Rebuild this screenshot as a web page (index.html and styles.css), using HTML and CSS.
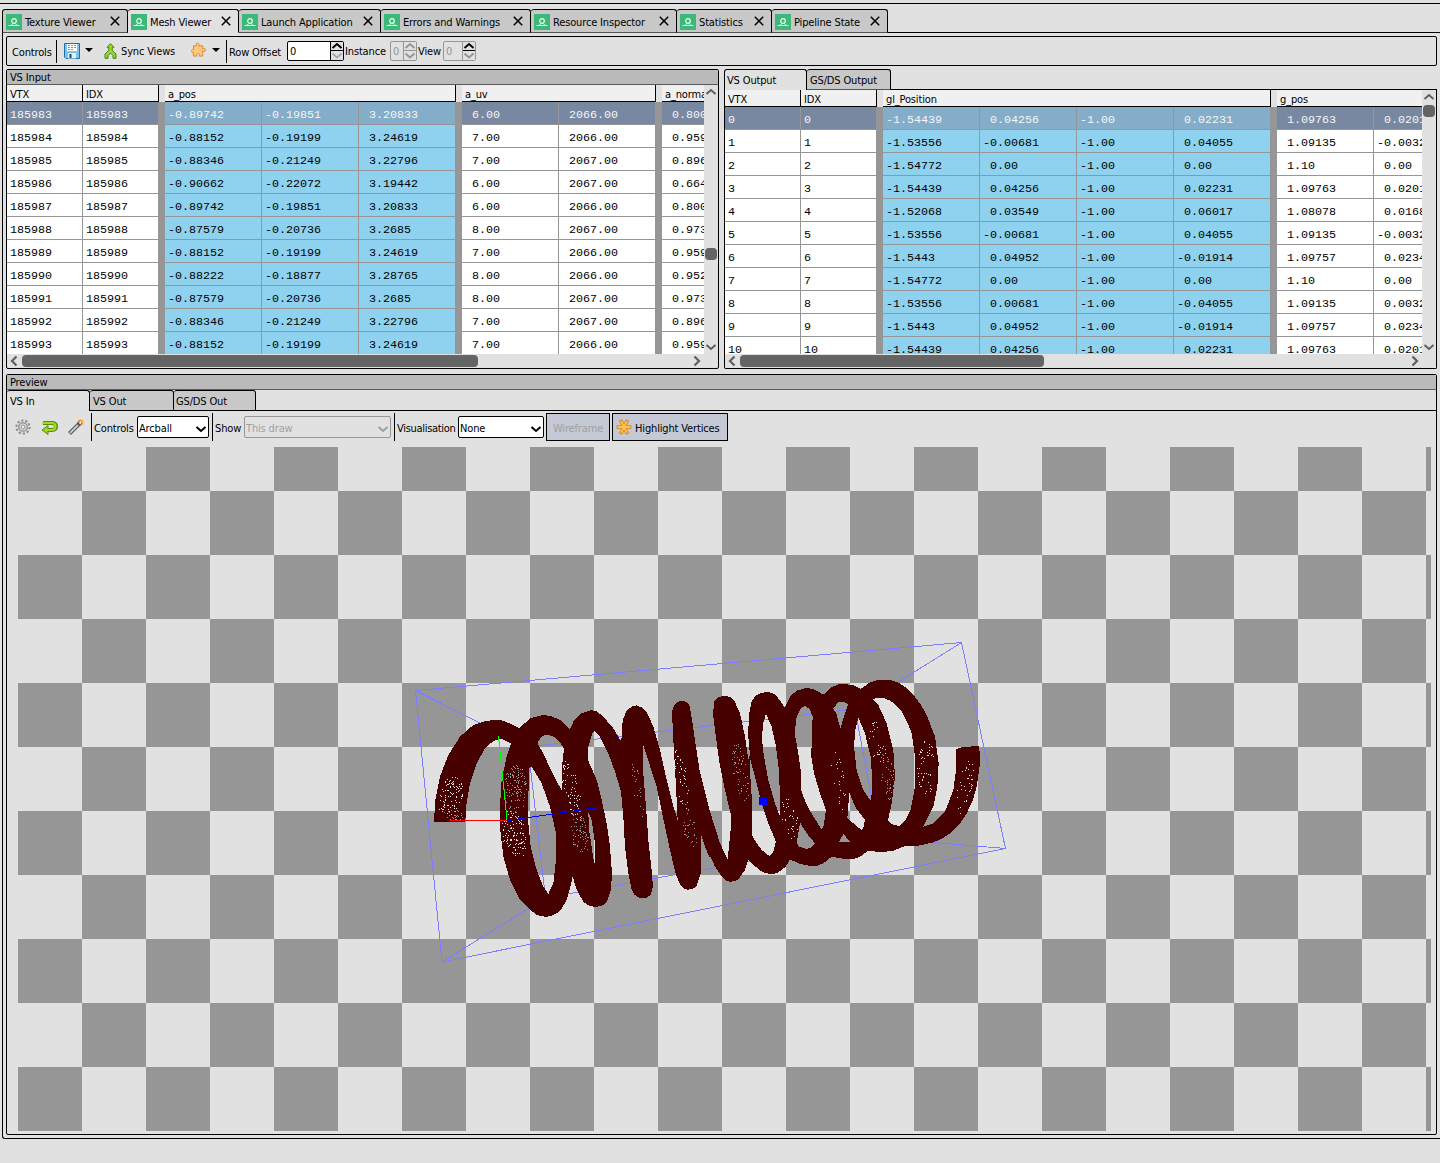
FILE: index.html
```html
<!DOCTYPE html>
<html lang="en">
<head>
<meta charset="utf-8">
<title>Mesh Viewer</title>
<link rel="stylesheet" href="styles.css">
</head>
<body>
<svg class="defs" aria-hidden="true">
  <symbol id="logo" viewBox="0 0 16 16"><rect width="16" height="16" fill="#3cb878"/><circle cx="8" cy="7" r="2.3" fill="none" stroke="#e9fff3" stroke-width="1.2"/><path d="M2.5 11.5H5L6.5 9.5M13.5 11.5H11L9.500 9.500M5 11.500H11" fill="none" stroke="#d6f5e4"/></symbol>
  <symbol id="close" viewBox="0 0 10 10"><path d="M.8 .8L9.200 9.200M9.200 .8L.8 9.200" stroke="#000" stroke-width="1.500" fill="none"/></symbol>
  <symbol id="up" viewBox="0 0 12 8"><path d="M1.500 6L6 2L10.500 6" fill="none" stroke="currentColor" stroke-width="2"/></symbol>
  <symbol id="down" viewBox="0 0 12 8"><path d="M1.500 2L6 6L10.500 2" fill="none" stroke="currentColor" stroke-width="2"/></symbol>
  <symbol id="left" viewBox="0 0 8 12"><path d="M6.500 1.500L2 6L6.500 10.500" fill="none" stroke="currentColor" stroke-width="2.200"/></symbol>
  <symbol id="right" viewBox="0 0 8 12"><path d="M1.500 1.500L6 6L1.500 10.500" fill="none" stroke="currentColor" stroke-width="2.200"/></symbol>
</svg>
<div class="window">
  <nav class="tabs main-tabs">
    <div class="tab w1"><svg class="logo"><use href="#logo"/></svg><span>Texture Viewer</span><svg class="close"><use href="#close"/></svg></div>
    <div class="tab active w2"><svg class="logo"><use href="#logo"/></svg><span>Mesh Viewer</span><svg class="close"><use href="#close"/></svg></div>
    <div class="tab w3"><svg class="logo"><use href="#logo"/></svg><span>Launch Application</span><svg class="close"><use href="#close"/></svg></div>
    <div class="tab w4"><svg class="logo"><use href="#logo"/></svg><span>Errors and Warnings</span><svg class="close"><use href="#close"/></svg></div>
    <div class="tab w5"><svg class="logo"><use href="#logo"/></svg><span>Resource Inspector</span><svg class="close"><use href="#close"/></svg></div>
    <div class="tab w6"><svg class="logo"><use href="#logo"/></svg><span>Statistics</span><svg class="close"><use href="#close"/></svg></div>
    <div class="tab w7"><svg class="logo"><use href="#logo"/></svg><span>Pipeline State</span><svg class="close"><use href="#close"/></svg></div>
    <div class="rest"></div>
  </nav>
  <main class="dock">
    <section class="controls">
      <span class="lbl-controls">Controls</span>
      <svg class="save" viewBox="0 0 16 16"><path d="M.5 .5H15.500V15.500H2L.5 14Z" fill="#7cc4ee" stroke="#1d70b0"/><rect x="3" y="1" width="10" height="7" fill="#fff"/><path d="M4 2.500H12M4 4.500H12M4 6.500H9" stroke="#8a9298" stroke-dasharray="2 1"/><rect x="4" y="10" width="8" height="5.500" fill="#e6eef4"/><rect x="5.500" y="11" width="2" height="4" fill="#246"/></svg>
      <i class="drop d1"></i>
      <svg class="sync" viewBox="0 0 13 16"><path d="M6.500 .7L10 4.300H8.300V7.500L12 11V15.300H9V12.500L6.500 10L4 12.500V15.300H1V11L4.700 7.500V4.300H3Z" fill="#9bd82c" stroke="#3f8511"/></svg>
      <span class="lbl-sync">Sync Views</span>
      <svg class="puzzle" viewBox="0 0 16 16"><path d="M2.500 3.500H6C4.800 1.500 5.500.6 7 .6S9.200 1.500 8 3.500H12.500V7C14.500 5.800 15.400 6.500 15.400 8S14.500 10.200 12.500 9V14.500H8.700C9.500 12.500 8.600 11.800 7.500 11.800S5.500 12.500 6.300 14.500H2.500V10.500C1 11 .6 10 .6 9S1 7 3 7.500Z" fill="#ffc978" stroke="#d98a3c"/></svg>
      <i class="drop d2"></i>
      <div class="row-offset"><span>Row Offset</span></div>
      <div class="spin s1"><b>0</b><div><svg><use href="#up"/></svg><svg class="dim"><use href="#down"/></svg></div></div>
      <span class="lbl-inst">Instance</span>
      <div class="spin off s2"><b>0</b><div><svg><use href="#up"/></svg><svg><use href="#down"/></svg></div></div>
      <span class="lbl-view">View</span>
      <div class="spin off s3"><b>0</b><div><svg class="on"><use href="#up"/></svg><svg><use href="#down"/></svg></div></div>
    </section>
    <div class="buffers">
      <section class="panel">
        <h2>VS Input</h2>
        <div class="grid-area">
          <div class="sheet">
            <div class="head"><span class="id">VTX</span><span class="id">IDX</span><i></i><span class="v3">a_pos</span><i></i><span class="v2">a_uv</span><i></i><span class="v3">a_normal</span></div>
            <div class="rows" id="input"></div>
          </div>
          <div class="vbar"><svg><use href="#up"/></svg><div class="thumb in"></div><svg><use href="#down"/></svg></div>
        </div>
        <div class="hbar"><svg><use href="#left"/></svg><div class="thumb in"></div><svg><use href="#right"/></svg></div>
      </section>
      <section class="output">
        <nav class="tabs sub">
          <div class="tab active o1"><span>VS Output</span></div>
          <div class="tab o2"><span>GS/DS Output</span></div>
          <div class="rest"></div>
        </nav>
        <div class="panel open">
          <div class="grid-area">
            <div class="sheet">
              <div class="head"><span class="id">VTX</span><span class="id">IDX</span><i></i><span class="v4">gl_Position</span><i></i><span class="v3">g_pos</span></div>
              <div class="rows" id="output"></div>
            </div>
            <div class="vbar"><svg><use href="#up"/></svg><div class="thumb out"></div><svg><use href="#down"/></svg></div>
          </div>
          <div class="hbar"><svg><use href="#left"/></svg><div class="thumb out"></div><svg><use href="#right"/></svg></div>
        </div>
      </section>
    </div>
    <section class="panel preview">
      <h2>Preview</h2>
      <nav class="tabs sub">
        <div class="tab active p1"><span>VS In</span></div>
        <div class="tab p2"><span>VS Out</span></div>
        <div class="tab p3"><span>GS/DS Out</span></div>
        <div class="rest"></div>
      </nav>
      <div class="tools">
        <svg class="gear" viewBox="0 0 16 16"><circle cx="8" cy="8" r="6.600" fill="none" stroke="#8d8d8d" stroke-width="2" stroke-dasharray="2.300 1.850"/><circle cx="8" cy="8" r="4.300" fill="#ddd" stroke="#999" stroke-width="1.600"/><circle cx="8" cy="8" r="2" fill="#eee" stroke="#8d8d8d"/></svg>
        <svg class="undo" viewBox="0 0 17 15"><path d="M2 3H11.500Q15 3.500 15 6.500T11.500 10H6" fill="none" stroke="#558d0b" stroke-width="4"/><path d="M7 5.500L1 10L7 14.500Z" fill="#9bd51a" stroke="#558d0b"/><path d="M1.500 3H11.500Q14.500 3.500 14.500 6.500T11.500 10H5" fill="none" stroke="#a4db20" stroke-width="2.200"/></svg>
        <svg class="wand" viewBox="0 0 16 16"><circle cx="12.500" cy="3.500" r="3.200" fill="#ffad42"/><path d="M1.500 14.500L11.500 4.500" stroke="#555" stroke-width="4"/><path d="M2 14L11 5" stroke="#c4c9cf" stroke-width="2"/><path d="M10 6L13 3" stroke="#555" stroke-width="3.600"/><path d="M11.500 4.500L13 3" stroke="#fff" stroke-width="2"/></svg>
        <div class="group g1"><span>Controls</span></div>
        <div class="select c1"><span>Arcball</span><svg><use href="#down"/></svg></div>
        <div class="group g2"><span>Show</span></div>
        <div class="select c2 off"><span>This draw</span><svg><use href="#down"/></svg></div>
        <div class="group g3"><span>Visualisation</span></div>
        <div class="select c3"><span>None</span><svg><use href="#down"/></svg></div>
        <button class="wire">Wireframe</button>
        <button class="highlight"><svg viewBox="0 0 16 16"><path d="M.5 8H15.500M4.500 1L11.500 15M11.500 1L4.500 15" stroke="#d98316" stroke-width="3.600"/><path d="M1.300 8H14.700M5 2L11 14M11 2L5 14" stroke="#ffc24e" stroke-width="1.800"/></svg><span>Highlight Vertices</span></button>
      </div>
      <div class="viewport">
        <svg class="scene" viewBox="18 447 1413 684" shape-rendering="crispEdges">
          <g class="bounds">
            <path d="M415.500 690.500L961.500 642.500L1005.500 848.500L442 962Z"/>
            <path d="M528 747L855 709L879 838L545.500 898Z"/>
            <path d="M415.500 690.500L528 747M961.500 642.500L855 709M1005.500 848.500L879 838M442 962L545.500 898"/>
          </g>
          <g class="coil" transform="translate(410 640) scale(.33333)">
            <path d="M72 545L76 480L90 410L115 345L150 290L190 255L230 242L270 240L300 250L328 265L360 235L400 225L425 229L450 240L480 268L490 245L510 222L543 210L560 214L580 230L610 265L634 305L636 260L640 235L650 212L665 200L680 196L697 203L712 220L730 260L750 330L770 420L790 500L803 540L797 420L790 300L786 215L792 195L802 186L815 183L828 185L838 195L843 220L855 300L870 400L900 515V655L885 620L874 585L872 700L860 738L848 747L833 749L820 745L810 732L798 705L780 630L765 560L740 440L700 316L700 400L708 500L715 600L725 690L729 740L722 765L710 773L690 774L673 764L665 750L655 700L645 620L640 530L633 455L615 395L595 340L570 290L552 272L545 285L535 320L534 360L560 420L575 480L590 550L600 620L606 700L603 750L590 787L575 798L555 801L535 796L520 785L500 750L488 710L485 725L470 780L455 806L440 820L422 829L405 830L380 825L355 805L330 780L300 720L280 650L271 570L270 500L275 420L290 350L303 310L275 296L250 303L225 325L200 370L180 430L168 500L166 545ZM365 380L357 385L358 410L353 500L355 550L362 620L380 690L400 740L415 762L430 730L438 660L438 580L420 500L395 430ZM385 315L400 340L425 395L457 455L457 370L462 325L448 304L435 292L412 284L397 288L385 303ZM535 518L537 570L545 620L552 668L556 668L555 610L545 540Z"/>
          </g>
          <g class="coil" transform="translate(700 630) scale(.33333)">
            <path d="M0 425L30 545L60 640L83 688L92 600L93 555L75 480L57 390L45 300L39 250L43 215L54 202L70 198L88 200L102 210L120 250L135 320L145 390L150 375L145 320L146 260L155 215L165 199L175 192L200 185L217 189L230 198L254 232L270 200L290 182L318 174L335 176L350 182L370 194L395 172L415 163L430 161L460 166L482 177L510 157L530 151L550 150L575 151L595 158L618 173L640 195L662 223L680 255L705 320L716 400L712 470L700 530L670 590L700 580L735 545L760 480L768 420L768 357L790 351L838 348L840 400L830 470L818 512L800 550L777 585L750 610L725 627L700 637L655 647L615 648L580 662L545 667L505 662L480 680L460 687L440 688L395 680L370 700L352 707L335 709L300 702L270 688L258 709L245 720L229 730L212 732L195 729L180 722L145 690L135 720L115 748L102 754L90 755L77 751L65 740L45 710L20 655L4 615L0 610ZM150 385L151 440L155 500L157 618L170 640L185 660L208 678L220 665L228 635L205 580L185 520L165 440ZM198 252L189 280L186 330L192 380L205 450L225 520L240 560L238 430L228 350L215 290ZM315 227L302 235L290 260L284 310L295 370L302 420L303 480L318 520L340 560L365 598L370 592L378 540L360 490L342 430L334 380L335 330L338 260L329 238ZM300 578L290 640L298 650L318 657L335 652L345 640L320 610ZM400 235L410 254L421 295L432 260L445 222L430 215L415 216ZM448 487L442 565L460 580L484 600L490 595L495 570L465 530ZM430 612L418 635H450ZM475 262L466 300L462 350L470 420L490 480L514 515L516 440L512 380L495 310ZM516 207L535 225L560 280L580 360L585 440L575 520L564 572L580 585L600 588L615 573L632 540L645 470L645 380L635 310L621 275L605 245L588 225L570 212L552 204L540 203Z"/>
          </g>
          <g id="vertices"></g>
          <path class="axis-x" d="M450 820.500H507"/>
          <path class="axis-y" d="M498.500 736L507 820"/>
          <path class="axis-z" d="M507 820.500L599 807.500"/>
          <rect class="picked" x="759" y="797" width="8" height="8"/>
        </svg>
      </div>
    </section>
  </main>
</div>
<script src="mesh.js"></script>
</body>
</html>
```
FILE: styles.css
```css
* { box-sizing: border-box; }
body { margin: 0; background: #e1e1e1; color: #000; font: 11px/14px "DejaVu Sans Condensed", "DejaVu Sans", sans-serif; font-stretch: condensed; letter-spacing: -0.15px; overflow: hidden; white-space: nowrap; }
svg { display: block; flex: none; }
.defs { width: 0; height: 0; position: absolute; }
.window { height: 1160px; margin-top: 3px; border-top: 1px solid #000; padding: 5px 0 0 2px; width: 1440px; overflow: hidden; }

.tabs { display: flex; flex: none; }
.tab { display: flex; align-items: center; flex: none; background: #c8c8c8; border: 1px solid #000; border-left: 0; border-bottom-color: #555; border-radius: 3px 3px 0 0; }
.tab:first-child { border-left: 1px solid #000; }
.tab.active { background: #e1e1e1; border-bottom-color: transparent; }
.rest { flex: 1; border-bottom: 1px solid #000; }
.main-tabs { height: 24px; }
.main-tabs .tab { padding: 1px 7px 0 3px; }
.main-tabs .tab:not(:first-child) { padding-left: 3px; }
.main-tabs span { flex: 1; padding: 2px 0 0 3px; }
.logo { width: 16px; height: 16px; }
.close { width: 10px; height: 10px; margin-top: -1px; }
.w1 { width: 126px; }
.w2 { width: 111px; }
.w3 { width: 142px; }
.w4 { width: 150px; }
.w5 { width: 146px; }
.w6 { width: 95px; }
.w7 { width: 116px; }

.dock { width: 1450px; height: 1106px; border: solid #000; border-width: 0 0 1px 1px; border-radius: 0 0 0 3px; padding: 3px; display: flex; flex-direction: column; }
.controls, .buffers, .preview { width: 1431px; flex: none; }
.controls { height: 30px; border: 1px solid #000; border-radius: 2px; display: flex; align-items: center; padding-left: 5px; }
.lbl-controls { width: 45px; height: 23px; border-right: 1px solid #000; line-height: 25px; }
.save { width: 16px; height: 16px; margin-left: 7px; }
.drop { width: 8px; height: 4px; background: #000; clip-path: polygon(0 0, 100% 0, 50% 100%); }
.d1 { margin: -2px 0 0 5px; }
.sync { width: 13px; height: 16px; margin-left: 11px; }
.lbl-sync { width: 70px; margin-left: 4px; padding-top: 2px; }
.puzzle { width: 15px; height: 16px; margin-top: -2px; }
.d2 { margin: -2px 0 0 6px; }
.row-offset { margin-left: 6px; border-left: 1px solid #000; width: 61px; height: 23px; line-height: 25px; padding-left: 2px; }
.spin { display: flex; height: 20px; border: 1px solid #000; border-radius: 2px; background: #fff; margin-top: -1px; }
.spin b { flex: 1; font-weight: 400; padding: 3px 0 0 2px; }
.spin div { width: 13px; background: #e1e1e1; border-left: 1px solid #000; display: flex; flex-direction: column; }
.spin svg { width: 12px; height: 9px; }
.spin svg:first-child { border-bottom: 1px solid #000; }
.spin .dim { color: #aaa; }
.spin.off { background: #e1e1e1; border-color: #969696; color: #969696; }
.spin.off div, .spin.off svg { border-color: #969696; }
.spin.off .on { color: #000; border-color: #000; }
.s1 { width: 57px; }
.s2 { width: 27px; }
.s3 { width: 33px; }
.lbl-inst { width: 46px; padding: 2px 0 0 1px; }
.lbl-view { width: 26px; padding: 2px 0 0 1px; }

.buffers { display: flex; gap: 5px; margin-top: 3px; height: 300px; }
.panel { border: 1px solid #000; border-radius: 2px; display: flex; flex-direction: column; }
.buffers > section { width: 713px; }
h2 { margin: 0; font: inherit; height: 15px; background: #bababa; border-bottom: 1px solid #5a5a5a; padding: 1px 3px 0; flex: none; }
.output { display: flex; flex-direction: column; }
.sub { height: 21px; }
.sub .tab { padding: 3px 2px 0 3px; }
.sub .tab.active { padding-top: 1px; padding-left: 2px; }
.output .sub .tab.active { border-bottom: 0; }
.o1 { width: 83px; }
.o2 { width: 84px; }
.open { border-top: 0; flex: 1; border-radius: 0 0 2px 2px; min-height: 0; }
.grid-area { display: flex; flex: 1; min-height: 0; }
.sheet { flex: 1; min-width: 0; overflow: hidden; display: flex; flex-direction: column; }
.head { display: flex; height: 17px; flex: none; }
.head span { background: #f0f0f0; border: solid #000; border-width: 0 1px 1px 0; padding: 3px 3px 0; line-height: 13px; flex: none; }
.id { width: 76px; flex: none; }
.v2 { width: 194px; flex: none; }
.v3 { width: 291px; flex: none; }
.v4 { width: 388px; flex: none; }
.head i, .row i { width: 6px; flex: none; }
.rows { flex: 1; min-height: 0; overflow: hidden; }
.row { display: flex; height: 23px; font: 11.7px/20px "Liberation Mono", monospace; letter-spacing: -0.02px; white-space: pre; }
.row span { flex: none; background: #fff; border: solid #969696; border-width: 0 1px 1px 0; padding: 3px 3px 0; }
.row .num { width: 97px; }
.row .pos { background: #8ed2f0; }
.row i { background: #969696; }
.row.current span { background: #7888a1; color: #f4f6f8; }
.row.current .pos { background: #83adc8; }
.vbar { width: 14px; display: flex; flex-direction: column; color: #5f5f5f; padding: 3px 1px; }
.vbar svg { width: 12px; height: 8px; }
.vbar .thumb { width: 12px; height: 12px; border-radius: 4px; background: #646464; margin-bottom: auto; }
.vbar .thumb.in { margin-top: 152px; }
.vbar .thumb.out { margin-top: 4px; }
.hbar { height: 14px; flex: none; display: flex; align-items: center; color: #5f5f5f; padding: 0 17px 0 3px; justify-content: space-between; }
.hbar svg { width: 8px; height: 12px; }
.hbar .thumb { height: 12px; border-radius: 4px; background: #646464; margin: 0 auto 0 4px; }
.hbar .thumb.in { width: 456px; }
.hbar .thumb.out { width: 304px; }

.preview { height: 761px; margin-top: 5px; }
.preview .tab:first-child { border-left: 0; }
.preview .tab { border-bottom-color: #000; }
.preview .tab.active { border-bottom: 0; padding-left: 3px; }
.p1 { width: 83px; }
.p2 { width: 84px; }
.p3 { width: 82px; }
.preview .p3 { padding-left: 2px; }
.tools { display: flex; align-items: center; height: 36px; flex: none; padding-bottom: 4px; }
.gear { width: 16px; height: 16px; margin-left: 8px; }
.undo { width: 17px; height: 15px; margin-left: 10px; }
.wand { width: 16px; height: 16px; margin-left: 10px; }
.group { height: 28px; border-left: 1px solid #000; padding-left: 2px; line-height: 31px; }
.g1 { width: 46px; margin-left: 7px; }
.g2 { width: 32px; margin-left: 3px; }
.g3 { width: 64px; margin-left: 3px; }
.g3 span { letter-spacing: -0.3px; }
.select { height: 22px; border: 1px solid #000; border-radius: 2px; background: #fff; display: flex; justify-content: space-between; align-items: center; padding: 3px 1px 0 1px; }
.select svg { width: 12px; height: 8px; margin-top: 1px; }
.select.off { background: #e1e1e1; border-color: #969696; color: #a0a0a0; }
.c1 { width: 72px; }
.c2 { width: 147px; }
.c3 { width: 86px; }
button { font: inherit; letter-spacing: inherit; height: 28px; border: 1px solid #000; background: #c4c9d5; padding: 3px 3px 0; color: #000; }
.wire { width: 64px; margin-left: 2px; color: #a0a0a0; }
.highlight { width: 116px; margin-left: 2px; display: flex; align-items: center; gap: 3px; }
.highlight svg { width: 16px; height: 16px; margin-top: -4px; }
.viewport { margin: 0 5px 0 11px; width: 1413px; height: 684px; background: conic-gradient(#e1e1e1 25%, #969696 0 50%, #e1e1e1 0 75%, #969696 0) 0 -20px / 128px 128px; }
.scene { width: 1413px; height: 684px; }
.bounds path { fill: none; stroke: #7d7dff; }
.coil { fill: #460000; fill-rule: evenodd; }
.axis-x { stroke: #f00; }
.axis-y { stroke: #0f0; }
.axis-z { stroke: #00f; }
.picked { fill: #00f; }
```
FILE: mesh.js
```js
const input = [
  ['-0.89742', '-0.19851', ' 3.20833', '6.00', '2066.00', '0.80012'],
  ['-0.88152', '-0.19199', ' 3.24619', '7.00', '2066.00', '0.95921'],
  ['-0.88346', '-0.21249', ' 3.22796', '7.00', '2067.00', '0.89640'],
  ['-0.90662', '-0.22072', ' 3.19442', '6.00', '2067.00', '0.66402'],
  ['-0.89742', '-0.19851', ' 3.20833', '6.00', '2066.00', '0.80012'],
  ['-0.87579', '-0.20736', ' 3.2685', '8.00', '2067.00', '0.97310'],
  ['-0.88152', '-0.19199', ' 3.24619', '7.00', '2066.00', '0.95921'],
  ['-0.88222', '-0.18877', ' 3.28765', '8.00', '2066.00', '0.95240'],
  ['-0.87579', '-0.20736', ' 3.2685', '8.00', '2067.00', '0.97310'],
  ['-0.88346', '-0.21249', ' 3.22796', '7.00', '2067.00', '0.89640'],
  ['-0.88152', '-0.19199', ' 3.24619', '7.00', '2066.00', '0.95921']
];
const output = [
  ['-1.54439', ' 0.04256', '-1.00', ' 0.02231', ' 1.09763', ' 0.0201'],
  ['-1.53556', '-0.00681', '-1.00', ' 0.04055', ' 1.09135', '-0.0032'],
  ['-1.54772', ' 0.00', '-1.00', ' 0.00', ' 1.10', ' 0.00'],
  ['-1.54439', ' 0.04256', '-1.00', ' 0.02231', ' 1.09763', ' 0.0201'],
  ['-1.52068', ' 0.03549', '-1.00', ' 0.06017', ' 1.08078', ' 0.0168'],
  ['-1.53556', '-0.00681', '-1.00', ' 0.04055', ' 1.09135', '-0.0032'],
  ['-1.5443', ' 0.04952', '-1.00', '-0.01914', ' 1.09757', ' 0.0234'],
  ['-1.54772', ' 0.00', '-1.00', ' 0.00', ' 1.10', ' 0.00'],
  ['-1.53556', ' 0.00681', '-1.00', '-0.04055', ' 1.09135', ' 0.0032'],
  ['-1.5443', ' 0.04952', '-1.00', '-0.01914', ' 1.09757', ' 0.0234'],
  ['-1.54439', ' 0.04256', '-1.00', ' 0.02231', ' 1.09763', ' 0.0201']
];

function fill(id, data, first, posCount, gaps) {
  document.getElementById(id).innerHTML = data.map((values, r) => {
    const key = `<span class="id">${first + r}</span>`;
    const cells = values.map((v, c) =>
      (gaps.includes(c) ? '<i></i>' : '') + `<span class="num${c < posCount ? ' pos' : ''}">${v}</span>`);
    return `<div class="row${r ? '' : ' current'}">${key}${key}${cells.join('')}</div>`;
  }).join('');
}
fill('input', input.map(r => r.map((v, c) => c > 2 ? ' ' + v : v)), 185983, 3, [0, 3, 5]);
fill('output', output, 0, 4, [0, 4]);

// Gaps between vertices: centre, radii, slant, count, colour
const speckles = [
  [450, 796, 12, 20, -.2, 95, '#e1e1e1'], [453, 815, 12, 5, 0, 25, '#969696'],
  [515, 789, 12, 24, 0, 120, '#969696'], [514, 835, 12, 25, .15, 115, '#e1e1e1'],
  [571, 790, 8, 30, .2, 65, '#e1e1e1'], [579, 832, 9, 24, .15, 75, '#969696'],
  [637, 788, 4, 30, .15, 22, '#969696'], [681, 779, 6, 32, .15, 40, '#e1e1e1'],
  [689, 825, 7, 23, .15, 32, '#969696'], [740, 772, 7, 30, .15, 60, '#969696'],
  [789, 817, 8, 22, .15, 32, '#e1e1e1'], [838, 780, 6, 30, .15, 22, '#e1e1e1'],
  [877, 742, 8, 24, .15, 30, '#e1e1e1'], [887, 777, 7, 26, .1, 48, '#969696'],
  [926, 768, 9, 28, 0, 50, '#e1e1e1'], [964, 787, 8, 27, -.2, 38, '#e1e1e1']
];
let seed = 7;
const rand = () => (seed = seed * 16807 % 2147483647) / 2147483647;
let dots = '';
for (const [cx, cy, rx, ry, slant, n, color] of speckles) {
  for (let i = 0; i < n; i++) {
    const a = rand() * Math.PI * 2, q = Math.sqrt(rand());
    const dy = Math.sin(a) * q * ry;
    dots += `<rect x="${Math.round(cx + Math.cos(a) * q * rx + dy * slant)}" y="${Math.round(cy + dy)}" width="1" height="1" fill="${color}"/>`;
  }
}
document.getElementById('vertices').innerHTML = dots;
```
